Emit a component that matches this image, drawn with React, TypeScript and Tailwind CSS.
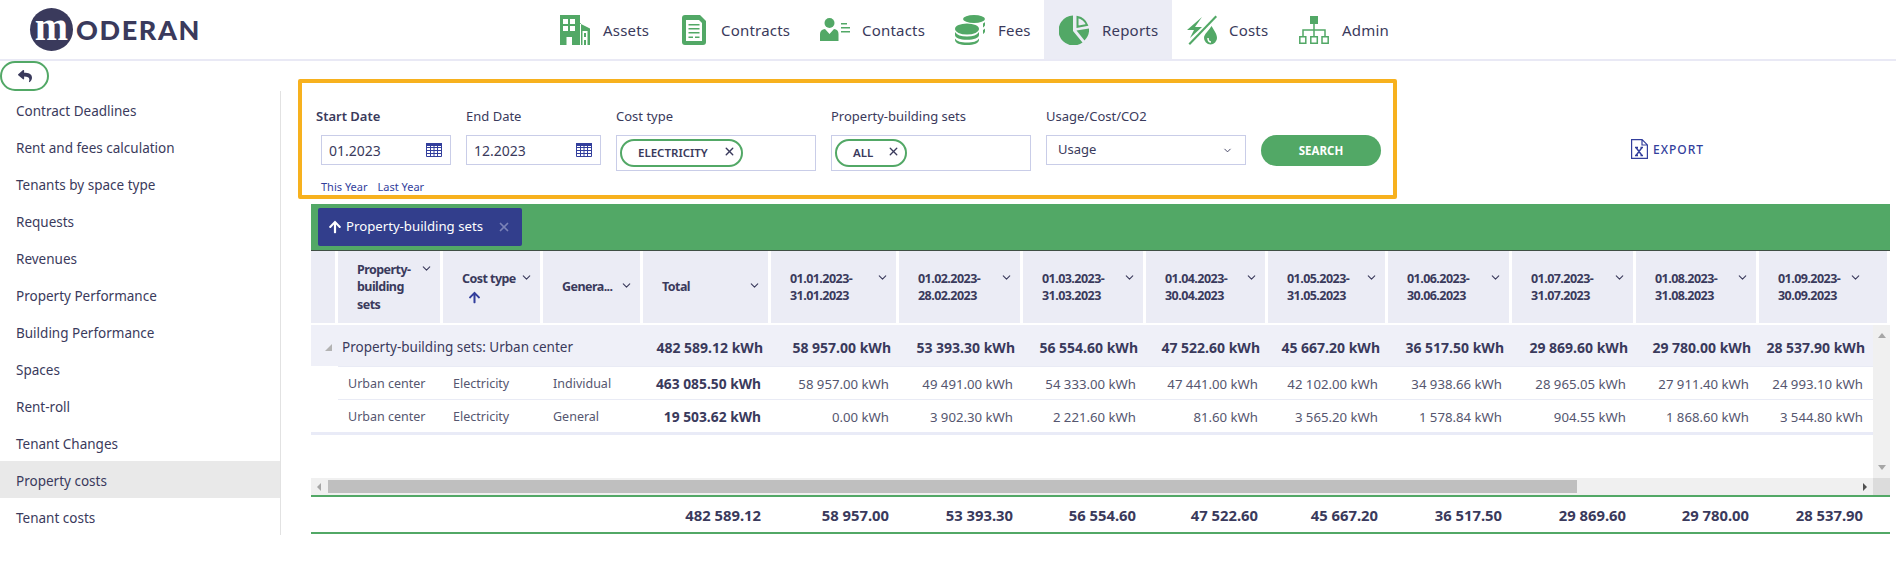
import { ChevronDown, X } from 'lucide-react';
import { FaArrowUp, FaReply } from 'react-icons/fa';

const AssetsIcon = () => (
    <svg viewBox="0 0 30 30" className="h-[30px] w-[30px] fill-[#52a866]">
        <path d="M0 0h20v8.500l10 5V30h-9V8h-1v22h-8v-8H6.500v8H0z" />
        <path
            fill="#fff"
            d="M3 4h5v5H3zM10 4h5v5h-5zM3 11h5v5H3zM10 11h5v5h-5zM22.500 16h5v14h-1.500v-5h-2v5h-1.500zM24 18v4h2v-4z"
        />
    </svg>
);

const ContractsIcon = () => (
    <svg viewBox="0 0 24 30" className="h-[30px] w-[24px]">
        <path
            fill="#52a866"
            d="M3 0h15l6 6v21a3 3 0 0 1-3 3H3a3 3 0 0 1-3-3V3a3 3 0 0 1 3-3z"
        />
        <path fill="#fff" d="M4 5h13l3 3v18H4z" />
        <path
            fill="#52a866"
            d="M6.500 9h11v1.600h-11zM6.500 13h11v1.600h-11zM6.500 17h11v1.600h-11zM6.500 21.500h4.500v1.600H6.500zM13 21.500h4.500v1.600H13z"
        />
    </svg>
);

const ContactsIcon = () => (
    <svg viewBox="0 0 30 23" className="h-[23px] w-[30px] fill-[#52a866]">
        <circle cx="9.500" cy="5" r="5" />
        <path d="M0 23v-7c0-3 2-4.500 5-5l4.500 5 4.500-5c3 .5 4.500 2 4.500 5v7z" />
        <path d="M21 5h6v1.500h-6zM21 9h9v1.500h-9zM21 13h9v1.500h-9z" />
    </svg>
);

const FeesIcon = () => (
    <svg viewBox="0 0 30 30" className="h-[30px] w-[30px] fill-[#52a866]">
        <ellipse cx="19" cy="4" rx="11" ry="4" />
        <path d="M28 8.500c1-.5 1.700-1 2-1.500v3c0 1-1 1.800-2 2.500zM28 15c1-.5 1.700-1 2-1.500v3c0 1-1 1.800-2 2.500z" />
        <ellipse cx="12" cy="14" rx="12" ry="5.500" />
        <path d="M0 17c2 3 6 4.500 12 4.500S22 20 24 17v3c0 3-5 4.800-12 4.800S0 23 0 20z" />
        <path d="M0 23.500c2 3 6 4 12 4s10-1 12-4V25c0 3-5 5-12 5S0 28 0 25z" />
    </svg>
);

const ReportsIcon = () => (
    <svg viewBox="0 0 30 30" className="h-[30px] w-[30px]">
        <path fill="#52a866" d="M14 .5v15.500l9.500 11.500A15 15 0 1 1 14 .5z" />
        <path fill="#52a866" d="M17.500 15.500l12.500-2a15 15 0 0 1-4.500 12z" />
        <path
            fill="none"
            stroke="#52a866"
            strokeWidth="2"
            d="M18.500 2a13 13 0 0 1 9.500 8l-9.500 1.700z"
        />
    </svg>
);

const CostsIcon = () => (
    <svg viewBox="0 0 30 30" className="h-[30px] w-[30px] fill-[#52a866]">
        <path d="M28.500 0.500L30 2 3 30l-1.500-1.500z" />
        <path d="M15 2L0 15h7l-4 8 12-11H8z" />
        <path d="M24.500 11c3 5 5.500 8 5.500 12a6.500 6.500 0 0 1-13 0c0-4 4.500-7 7.500-12z" />
        <path fill="none" stroke="#fff" strokeWidth="1.500" d="M21 23c0 2.500 1.500 4 3 4" />
    </svg>
);

const AdminIcon = () => (
    <svg viewBox="0 0 30 28" className="h-[28px] w-[30px]">
        <path fill="#52a866" d="M11 0h8v8h-8z" />
        <path
            fill="none"
            stroke="#52a866"
            strokeWidth="1.500"
            d="M15 8v12M4 20v-6h22v6M.8 20.800h6v6.500h-6zM11.800 20.800h6.500v6.500h-6.500zM23 20.800h6.200v6.500H23z"
        />
    </svg>
);

const CalendarIcon = () => (
    <svg viewBox="0 0 16 16" className="h-4 w-4">
        <path
            fill="none"
            stroke="#323e9c"
            strokeWidth="1"
            d="M.5 1.500h15v13H.5zM.5 5.500h15M.5 8.500h15M.5 11.500h15M4.500 1.500v13M8 1.500v13M11.500 1.500v13"
        />
        <path fill="#323e9c" d="M0 1h16v3H0z" />
    </svg>
);

const ExportIcon = () => (
    <svg viewBox="0 0 17 20" className="h-[20px] w-[17px]">
        <path
            fill="none"
            stroke="#323e9c"
            strokeWidth="1.200"
            d="M.6.6h10.500l5.300 5.300v13.500H.6zM11 .6v5.400h5.400"
        />
        <path
            fill="none"
            stroke="#323e9c"
            strokeWidth="1.400"
            d="M5 8.500l6 8M11 8.500l-6 8M4 8.500h3M9.500 8.500h2.500M4 16.500h3M9.500 16.500h2.500"
        />
    </svg>
);

const navItems = [
    { label: 'Assets', icon: <AssetsIcon />, width: 'w-[122px]', gap: 'gap-[13px]' },
    { label: 'Contracts', icon: <ContractsIcon />, width: 'w-[138px]', gap: 'gap-[15px]' },
    { label: 'Contacts', icon: <ContactsIcon />, width: 'w-[135px]', gap: 'gap-[12px]' },
    { label: 'Fees', icon: <FeesIcon />, width: 'w-[104px]', gap: 'gap-[13px]' },
    { label: 'Reports', icon: <ReportsIcon />, width: 'w-[128px] bg-[#ebecf5]', gap: 'gap-[13px]' },
    { label: 'Costs', icon: <CostsIcon />, width: 'w-[112px]', gap: 'gap-[12px]' },
    { label: 'Admin', icon: <AdminIcon />, width: 'w-[120px]', gap: 'gap-[13px]' },
];

const sideItems = [
    'Contract Deadlines',
    'Rent and fees calculation',
    'Tenants by space type',
    'Requests',
    'Revenues',
    'Property Performance',
    'Building Performance',
    'Spaces',
    'Rent-roll',
    'Tenant Changes',
    'Property costs',
    'Tenant costs',
];

const dateHeaders = [
    ['01.01.2023-', '31.01.2023'],
    ['01.02.2023-', '28.02.2023'],
    ['01.03.2023-', '31.03.2023'],
    ['01.04.2023-', '30.04.2023'],
    ['01.05.2023-', '31.05.2023'],
    ['01.06.2023-', '30.06.2023'],
    ['01.07.2023-', '31.07.2023'],
    ['01.08.2023-', '31.08.2023'],
    ['01.09.2023-', '30.09.2023'],
];

const totals = [
    '482 589.12',
    '58 957.00',
    '53 393.30',
    '56 554.60',
    '47 522.60',
    '45 667.20',
    '36 517.50',
    '29 869.60',
    '29 780.00',
    '28 537.90',
];

const rows = [
    {
        set: 'Urban center',
        type: 'Electricity',
        general: 'Individual',
        values: [
            '463 085.50',
            '58 957.00',
            '49 491.00',
            '54 333.00',
            '47 441.00',
            '42 102.00',
            '34 938.66',
            '28 965.05',
            '27 911.40',
            '24 993.10',
        ],
    },
    {
        set: 'Urban center',
        type: 'Electricity',
        general: 'General',
        values: [
            '19 503.62',
            '0.00',
            '3 902.30',
            '2 221.60',
            '81.60',
            '3 565.20',
            '1 578.84',
            '904.55',
            '1 868.60',
            '3 544.80',
        ],
    },
];

const headGrid =
    'grid grid-cols-[27px_105px_100px_100px_128px_128px_124px_123px_122px_120px_124px_124px_123px_131px]';
const bodyGrid =
    'grid grid-cols-[27px_105px_100px_100px_128px_128px_124px_123px_122px_120px_124px_124px_123px_114px]';

const HeadCell = ({
    children,
    last,
}: {
    children: React.ReactNode;
    last?: boolean;
}) => (
    <div
        className={`flex items-center border-r-[3px] border-white bg-[#ebecf5] pl-[19px] text-[12.5px] leading-[17.5px] font-bold tracking-[-0.55px] whitespace-nowrap ${
            last ? 'border-r-0 pr-[25px]' : 'pr-[7px]'
        }`}
    >
        <div className="flex w-full items-start justify-between">
            <div>{children}</div>
            <ChevronDown size={13} strokeWidth={2} className="mt-[1px] shrink-0" />
        </div>
    </div>
);

const Chip = ({ label, width }: { label: string; width: string }) => (
    <div
        className={`flex h-[28px] items-center justify-between rounded-full border-2 border-[#52a866] pr-[5px] pl-[16px] text-[11.5px] font-semibold ${width}`}
    >
        {label}
        <X size={13} strokeWidth={2.5} className="mb-[3px]" />
    </div>
);

const App = () => {
    return (
        <div className="h-[575px] w-[1896px] overflow-hidden bg-white text-[13px] text-[#3a3a5c] [font-family:'Noto_Sans',sans-serif]">
            <header className="flex h-[61px] border-b-2 border-[#e9e9f5]">
                <div className="w-[545px] pt-[8px] pl-[30px]">
                    <div className="flex items-center">
                        <div className="flex h-[43px] w-[43px] items-center justify-center rounded-full bg-[#3a3a5c] pb-[6px] text-[40px] leading-none font-bold text-white [font-family:'Liberation_Serif',serif]">
                            m
                        </div>
                        <span className="ml-[3px] text-[27px] leading-none font-black tracking-[1.6px] [font-family:'Lato',sans-serif]">
                            ODERAN
                        </span>
                    </div>
                </div>
                <nav className="flex">
                    {navItems.map((item) => (
                        <div
                            key={item.label}
                            className={`flex h-[59px] items-center pl-[15px] text-[15px] tracking-[0.2px] ${item.width} ${item.gap}`}
                        >
                            {item.icon}
                            <span className="pt-[1px]">{item.label}</span>
                        </div>
                    ))}
                </nav>
            </header>
            <div className="flex">
                <aside className="w-[281px] shrink-0">
                    <div className="flex h-[30px] w-[49px] items-center justify-center rounded-full border-2 border-[#52a866]">
                        <FaReply size={14} className="text-[#3a3a5c]" />
                    </div>
                    <ul className="border-r border-[#e2e2e2]">
                        {sideItems.map((item) => (
                            <li
                                key={item}
                                className={`flex h-[37px] items-center pt-[3px] pl-[16px] text-[13.5px] ${
                                    item === 'Property costs' ? 'bg-[#e9e9e9]' : ''
                                }`}
                            >
                                {item}
                            </li>
                        ))}
                    </ul>
                </aside>
                <main className="min-w-0 flex-1">
                    <div className="mt-[18px] ml-[17px] flex items-start">
                        <div className="flex h-[120px] w-[1099px] rounded-[2px] border-4 border-[#f7b11e] pt-[24px] pl-[14px]">
                            <div className="w-[150px]">
                                <div className="h-[20px] font-semibold">Start Date</div>
                                <div className="mt-[8px] ml-[5px] flex h-[30px] w-[130px] items-center justify-between border border-[#c9cde8] pr-[8px] pl-[7px] text-[14px]">
                                    01.2023
                                    <CalendarIcon />
                                </div>
                                <div className="mt-[14px] ml-[5px] flex gap-[10px] text-[11px] leading-[16px] text-[#323e9c]">
                                    <span>This Year</span>
                                    <span>Last Year</span>
                                </div>
                            </div>
                            <div className="w-[150px]">
                                <div className="h-[20px]">End Date</div>
                                <div className="mt-[8px] flex h-[30px] w-[135px] items-center justify-between border border-[#c9cde8] pr-[8px] pl-[7px] text-[14px]">
                                    12.2023
                                    <CalendarIcon />
                                </div>
                            </div>
                            <div className="w-[215px]">
                                <div className="h-[20px]">Cost type</div>
                                <div className="mt-[8px] flex h-[36px] w-[200px] items-center border border-[#c9cde8] pl-[3px]">
                                    <Chip label="ELECTRICITY" width="w-[123px]" />
                                </div>
                            </div>
                            <div className="w-[215px]">
                                <div className="h-[20px]">Property-building sets</div>
                                <div className="mt-[8px] flex h-[36px] w-[200px] items-center border border-[#c9cde8] pl-[3px]">
                                    <Chip label="ALL" width="w-[72px]" />
                                </div>
                            </div>
                            <div className="w-[215px]">
                                <div className="h-[20px]">Usage/Cost/CO2</div>
                                <div className="mt-[8px] flex h-[30px] w-[200px] items-center justify-between border border-[#c9cde8] pr-[12px] pl-[11px]">
                                    Usage
                                    <ChevronDown size={11} />
                                </div>
                            </div>
                            <div className="mt-[28px] flex h-[31px] w-[120px] items-center justify-center rounded-full bg-[#52a866] text-[11.5px] font-bold text-white">
                                SEARCH
                            </div>
                        </div>
                        <div className="mt-[60px] ml-[234px] flex items-center gap-[5px] text-[12px] font-medium tracking-[1px] text-[#323e9c]">
                            <ExportIcon />
                            <span className="pt-[2px]">EXPORT</span>
                        </div>
                    </div>

                    <div className="mt-[5px] ml-[30px] w-[1579px]">
                        <div className="flex h-[47px] items-start border-b border-[#3f4f44] bg-[#52a866] pt-[4px] pl-[7px]">
                            <div className="flex h-[38px] w-[204px] items-center rounded-[2px] bg-[#323e8c] pl-[10px] text-[13.2px] whitespace-nowrap text-white">
                                <FaArrowUp size={14} className="mr-[4px]" />
                                Property-building sets
                                <X size={14} strokeWidth={3} className="ml-[14px] text-[#7b83b8]" />
                            </div>
                        </div>
                        <div className={`${headGrid} h-[72px]`}>
                            <div className="border-r-[3px] border-white bg-[#ebecf5]" />
                            <HeadCell>
                                Property-
                                <br />
                                building
                                <br />
                                sets
                            </HeadCell>
                            <HeadCell>
                                Cost type
                                <br />
                                <FaArrowUp size={13} className="mt-[3px] ml-[6px] text-[#323e9c]" />
                            </HeadCell>
                            <HeadCell>Genera...</HeadCell>
                            <HeadCell>Total</HeadCell>
                            {dateHeaders.map(([from, to], index) => (
                                <HeadCell key={from} last={index === dateHeaders.length - 1}>
                                    {from}
                                    <br />
                                    {to}
                                </HeadCell>
                            ))}
                        </div>

                        <div className="mt-[2px] flex h-[153px]">
                            <div className="w-[1562px]">
                                <div className={`${bodyGrid} h-[41px] items-center bg-[#eff0f8] pt-[3px] font-bold`}>
                                    <div className="col-span-4 flex items-center pl-[14px] text-[13.5px] font-normal">
                                        <svg viewBox="0 0 7 7" className="mr-[10px] h-[7px] w-[7px] fill-[#b3b3b3]">
                                            <path d="M7 0v7H0z" />
                                        </svg>
                                        <span>Property-building sets: Urban center</span>
                                    </div>
                                    {totals.map((value) => (
                                        <div key={value} className="pr-[8px] text-right text-[14px]">
                                            {value} kWh
                                        </div>
                                    ))}
                                </div>
                                {rows.map((row) => (
                                    <div key={row.general} className="ml-[27px] border-t border-[#e9ebf5]">
                                        <div className="-ml-[27px] grid h-[32px] grid-cols-[27px_105px_100px_100px_128px_128px_124px_123px_122px_120px_124px_124px_123px_114px] items-center pt-[3px] text-[12.5px] text-[#55566f]">
                                            <div />
                                            <div className="pl-[10px]">{row.set}</div>
                                            <div className="pl-[10px]">{row.type}</div>
                                            <div className="pl-[10px]">{row.general}</div>
                                            {row.values.map((value, index) => (
                                                <div
                                                    key={index}
                                                    className={`pr-[10px] text-right ${
                                                        index === 0
                                                            ? 'text-[13.8px] font-bold text-[#3a3a5c]'
                                                            : 'text-[13.2px]'
                                                    }`}
                                                >
                                                    {value} kWh
                                                </div>
                                            ))}
                                        </div>
                                    </div>
                                ))}
                                <div className="border-t-[3px] border-[#e9ebf7]" />
                            </div>
                            <div className="flex w-[17px] flex-col items-center justify-between bg-[#f0f0f0] py-[8px]">
                                <span className="h-0 w-0 border-x-[4px] border-b-[5px] border-x-transparent border-b-[#a6a6a6]" />
                                <span className="h-0 w-0 border-x-[4px] border-t-[5px] border-x-transparent border-t-[#a6a6a6]" />
                            </div>
                        </div>

                        <div className="flex h-[17px]">
                            <div className="flex w-[1562px] items-center bg-[#f0f0f0]">
                                <span className="ml-[6px] h-0 w-0 border-y-[4px] border-r-[4px] border-y-transparent border-r-[#a6a6a6]" />
                                <div className="ml-[7px] h-[13px] w-[1249px] bg-[#bfbfbf]" />
                                <span className="mr-[6px] ml-auto h-0 w-0 border-y-[4px] border-l-[4px] border-y-transparent border-l-[#505050]" />
                            </div>
                            <div className="w-[17px] bg-[#dcdcdc]" />
                        </div>

                        <div className={`${bodyGrid} h-[39px] items-center border-y-2 border-[#52a866] pt-[2px] text-[14.8px] font-bold`}>
                            <div className="col-span-4" />
                            {totals.map((value) => (
                                <div key={value} className="pr-[10px] text-right">
                                    {value}
                                </div>
                            ))}
                        </div>
                    </div>
                </main>
            </div>
        </div>
    );
};

export default App;
